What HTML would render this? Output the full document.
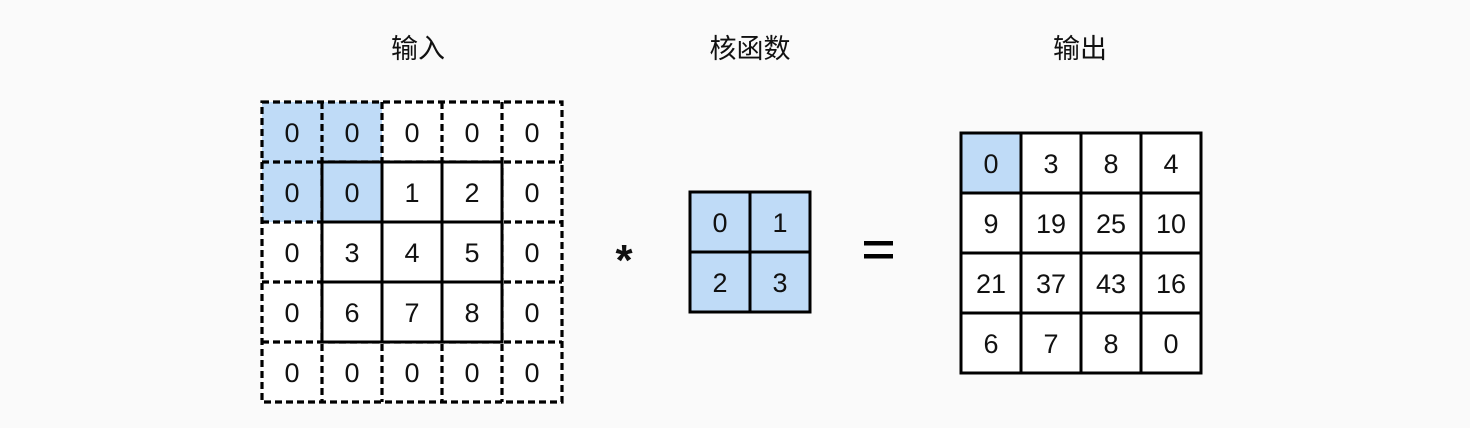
<!DOCTYPE html>
<html><head><meta charset="utf-8"><style>
html,body{margin:0;padding:0;background:#fafafa;}
svg{display:block}
text{font-family:"Liberation Sans","Noto Sans CJK SC",sans-serif;fill:#111}
</style></head><body>
<svg width="1470" height="428" viewBox="0 0 1470 428">
<rect width="1470" height="428" fill="#fafafa"/>
<g font-size="27" text-anchor="middle">
<text x="418" y="58">输入</text>
<text x="750" y="58">核函数</text>
<text x="1080" y="58">输出</text>
</g>
<rect x="262" y="102" width="300" height="300" fill="#fff"/>
<rect x="262" y="102" width="60" height="120" fill="#bfdbf7"/>
<rect x="322" y="102" width="60" height="120" fill="#bfdbf7"/>
<g stroke="#000" stroke-width="3.2" stroke-dasharray="7,4" fill="none">
<rect x="262" y="102" width="300" height="300"/>
<line x1="322" y1="102" x2="322" y2="402"/><line x1="382" y1="102" x2="382" y2="402"/>
<line x1="442" y1="102" x2="442" y2="402"/><line x1="502" y1="102" x2="502" y2="402"/>
<line x1="262" y1="162" x2="562" y2="162"/><line x1="262" y1="222" x2="562" y2="222"/>
<line x1="262" y1="282" x2="562" y2="282"/><line x1="262" y1="342" x2="562" y2="342"/>
</g>
<rect x="323" y="163" width="178" height="178" fill="#fff"/>
<rect x="323" y="163" width="58" height="58" fill="#bfdbf7"/>
<g stroke="#000" stroke-width="3" fill="none">
<rect x="322" y="162" width="180" height="180"/>
<line x1="382" y1="162" x2="382" y2="342"/><line x1="442" y1="162" x2="442" y2="342"/>
<line x1="322" y1="222" x2="502" y2="222"/><line x1="322" y1="282" x2="502" y2="282"/>
</g>
<g font-size="27" text-anchor="middle">
<text x="292" y="142">0</text><text x="352" y="142">0</text><text x="412" y="142">0</text><text x="472" y="142">0</text><text x="532" y="142">0</text>
<text x="292" y="202">0</text><text x="352" y="202">0</text><text x="412" y="202">1</text><text x="472" y="202">2</text><text x="532" y="202">0</text>
<text x="292" y="262">0</text><text x="352" y="262">3</text><text x="412" y="262">4</text><text x="472" y="262">5</text><text x="532" y="262">0</text>
<text x="292" y="322">0</text><text x="352" y="322">6</text><text x="412" y="322">7</text><text x="472" y="322">8</text><text x="532" y="322">0</text>
<text x="292" y="382">0</text><text x="352" y="382">0</text><text x="412" y="382">0</text><text x="472" y="382">0</text><text x="532" y="382">0</text>
</g>
<text x="624" y="275" font-size="44" font-weight="bold" text-anchor="middle">*</text>
<rect x="690" y="192" width="120" height="120" fill="#bfdbf7" stroke="#000" stroke-width="3"/>
<line x1="750" y1="192" x2="750" y2="312" stroke="#000" stroke-width="3"/>
<line x1="690" y1="252" x2="810" y2="252" stroke="#000" stroke-width="3"/>
<g font-size="27" text-anchor="middle">
<text x="720" y="232">0</text><text x="780" y="232">1</text>
<text x="720" y="292">2</text><text x="780" y="292">3</text>
</g>
<rect x="864" y="241" width="29" height="4.5" fill="#000"/>
<rect x="864" y="254" width="29" height="4.5" fill="#000"/>
<rect x="961" y="133" width="240" height="240" fill="#fff"/>
<rect x="961" y="133" width="60" height="60" fill="#bfdbf7"/>
<g stroke="#000" stroke-width="3" fill="none">
<rect x="961" y="133" width="240" height="240"/>
<line x1="1021" y1="133" x2="1021" y2="373"/><line x1="1081" y1="133" x2="1081" y2="373"/><line x1="1141" y1="133" x2="1141" y2="373"/>
<line x1="961" y1="193" x2="1201" y2="193"/><line x1="961" y1="253" x2="1201" y2="253"/><line x1="961" y1="313" x2="1201" y2="313"/>
</g>
<g font-size="27" text-anchor="middle">
<text x="991" y="173">0</text><text x="1051" y="173">3</text><text x="1111" y="173">8</text><text x="1171" y="173">4</text>
<text x="991" y="233">9</text><text x="1051" y="233">19</text><text x="1111" y="233">25</text><text x="1171" y="233">10</text>
<text x="991" y="293">21</text><text x="1051" y="293">37</text><text x="1111" y="293">43</text><text x="1171" y="293">16</text>
<text x="991" y="353">6</text><text x="1051" y="353">7</text><text x="1111" y="353">8</text><text x="1171" y="353">0</text>
</g>
</svg>
</body></html>
